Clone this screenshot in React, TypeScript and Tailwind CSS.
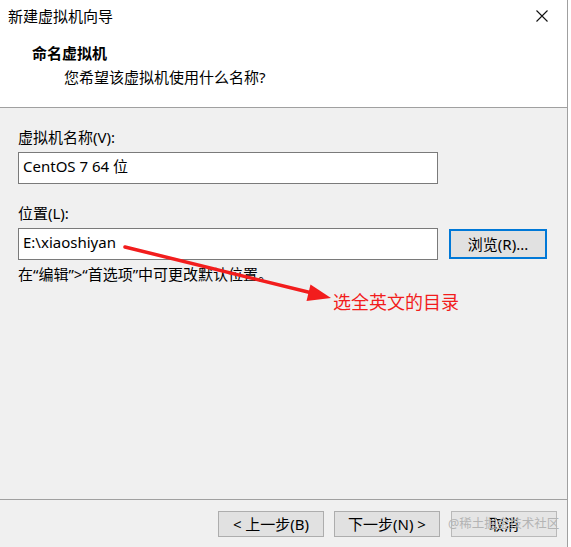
import React from 'react';

const font = { fontFamily: '"Noto Sans", "Noto Sans CJK SC", sans-serif' };

const WizardButton: React.FC<{ label: string }> = ({ label }) => (
    <button
        type="button"
        className="w-[106px] h-[26px] border border-[#adadad] bg-[#e1e1e1] text-[15px] leading-[20px] text-black flex items-center justify-center"
    >
        {label}
    </button>
);

export default function App() {
    return (
        <div className="w-[571px] h-[547px] flex bg-white" style={font}>
            <div className="relative w-[568px] h-full flex flex-col bg-[#f0f0f0] border-r border-[#a0a0a0]">
                {/* header */}
                <div className="h-[108px] bg-white border-b border-[#a0a0a0] flex flex-col">
                    <div className="h-[32px] flex items-center justify-between pl-[8px] pr-[19px]">
                        <span className="text-[15px] leading-[20px] text-black">新建虚拟机向导</span>
                        <svg width="12" height="12" viewBox="0 0 12 12">
                            <path d="M0.5 0.5 L11.5 11.5 M11.5 0.5 L0.5 11.5" stroke="#111" strokeWidth="1.1" />
                        </svg>
                    </div>
                    <div className="mt-[11px] pl-[32px] text-[15px] leading-[20px] font-bold text-black">命名虚拟机</div>
                    <div className="mt-[4px] pl-[64px] text-[15px] leading-[20px] text-black">您希望该虚拟机使用什么名称?</div>
                </div>

                {/* body */}
                <div className="flex-1 flex flex-col pl-[18px] pt-[19px]">
                    <label className="text-[15px] leading-[20px] text-black">虚拟机名称(V):</label>
                    <div className="mt-[5px] w-[420px] h-[32px] border border-[#7a7a7a] bg-white pl-[4px] pt-[3px] text-[15px] leading-[20px] text-black">
                        CentOS 7 64 位
                    </div>
                    <label className="mt-[19px] text-[15px] leading-[20px] text-black">位置(L):</label>
                    <div className="mt-[5px] flex items-center">
                        <div className="w-[420px] h-[32px] border border-[#7a7a7a] bg-white pl-[4px] pt-[3px] text-[15px] leading-[20px] text-black">
                            E:\xiaoshiyan
                        </div>
                        <button
                            type="button"
                            className="ml-[11px] w-[98px] h-[30px] border-2 border-[#0078d7] bg-[#e1e1e1] text-[15px] leading-[20px] text-black"
                        >
                            浏览(R)...
                        </button>
                    </div>
                    <div className="mt-[4px] text-[15px] leading-[20px] text-black">在“编辑”&gt;“首选项”中可更改默认位置。</div>
                </div>

                {/* footer */}
                <div className="h-[48px] border-t border-[#a0a0a0] flex justify-end pt-[11px] pr-[10px]">
                    <WizardButton label="< 上一步(B)" />
                    <div className="ml-[10px]">
                        <WizardButton label="下一步(N) >" />
                    </div>
                    <div className="relative ml-[11px]">
                        <button
                            type="button"
                            className="w-[106px] h-[26px] border border-[#b9b9b9] bg-[#e5e5e5] text-[15px] leading-[20px] text-black flex items-center justify-center"
                        >
                            取消
                        </button>
                        <span className="absolute left-[-3px] top-[5px] text-[12.5px] leading-[16px] text-[#b4b4b4] whitespace-nowrap pointer-events-none">
                            @稀土掘金技术社区
                        </span>
                    </div>
                </div>

                {/* red annotation */}
                <svg className="absolute left-0 top-0 pointer-events-none" width="568" height="547">
                    <path d="M125 247 L312 293" stroke="#f21d1d" strokeWidth="3.5" strokeLinecap="round" />
                    <polygon points="331,298 306.5,301 310.5,284.5" fill="#f21d1d" />
                </svg>
                <span className="absolute left-[333px] top-[290px] text-[18px] leading-[24px] text-[#f21d1d]">选全英文的目录</span>
            </div>
        </div>
    );
}
